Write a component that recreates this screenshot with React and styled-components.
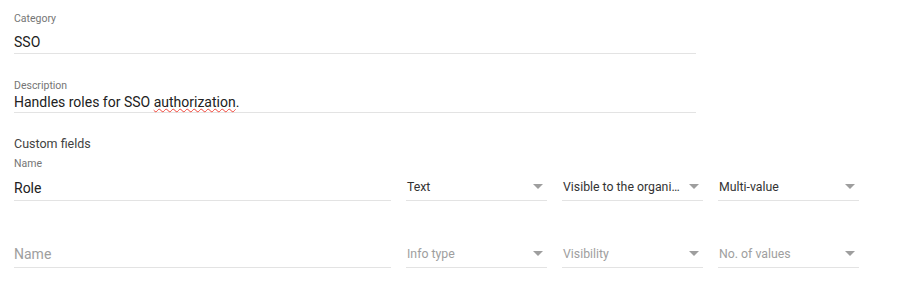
import React from "react";
import styled, { createGlobalStyle } from "styled-components";

const Global = createGlobalStyle`
  html, body { margin: 0; padding: 0; background: #fff; }
  body { font-family: Roboto, "Noto Sans", Arial, sans-serif; -webkit-font-smoothing: antialiased; }
`;

const Page = styled.div`
  padding: 12px 0 0 14px;
  width: 900px;
  box-sizing: border-box;
`;

const Field = styled.div`
  width: ${(p) => p.$w}px;
  display: flex;
  flex-direction: column;
  margin-top: ${(p) => p.$mt || 0}px;
`;

const Label = styled.div`
  font-size: 10.5px;
  line-height: 14px;
  color: #757575;
`;

const Value = styled.div`
  font-size: 14px;
  line-height: ${(p) => p.$lh || 20}px;
  color: ${(p) => (p.$placeholder ? "#9e9e9e" : "#212121")};
  padding: ${(p) => p.$pt || 0}px 0 ${(p) => p.$pb || 0}px;
  border-bottom: 1px solid #e3e3e3;
  white-space: nowrap;
`;

const Spell = styled.span`
  text-decoration: underline wavy #f04438;
  text-decoration-thickness: 1px;
  text-underline-offset: 1px;
`;

const SectionTitle = styled.div`
  font-size: 12.5px;
  line-height: 16px;
  color: #424242;
  margin: 23px 0 5px;
`;

const Row = styled.div`
  display: flex;
  align-items: flex-end;
  gap: 15px;
  margin-top: ${(p) => p.$mt || 0}px;
`;

const Select = styled.div`
  width: 141px;
  display: flex;
  align-items: center;
  height: 26px;
  border-bottom: 1px solid #e3e3e3;
  box-sizing: border-box;
  padding-bottom: 2px;
  gap: 4px;
`;

const SelectText = styled.div`
  flex: 1;
  min-width: 0;
  font-size: 12.3px;
  color: ${(p) => (p.$placeholder ? "#9e9e9e" : "#333")};
  white-space: nowrap;
  overflow: hidden;
  text-overflow: ellipsis;
  padding-left: 1px;
`;

const Arrow = styled.div`
  width: 0;
  height: 0;
  border-left: 5px solid transparent;
  border-right: 5px solid transparent;
  border-top: 5px solid #9e9e9e;
  margin-right: 4px;
  flex: none;
`;

const Dropdown = ({ children, placeholder }) => (
  <Select>
    <SelectText $placeholder={placeholder}>{children}</SelectText>
    <Arrow />
  </Select>
);

export default function App() {
  return (
    <Page>
      <Global />
      <Field $w={682}>
        <Label>Category</Label>
        <Value $pt={6} $pb={1}>SSO</Value>
      </Field>
      <Field $w={682} $mt={25}>
        <Label>Description</Label>
        <Value $lh={18} $pb={1}>
          Handles roles for SSO <Spell>authorization</Spell>.
        </Value>
      </Field>
      <SectionTitle>Custom fields</SectionTitle>
      <Row>
        <Field $w={377}>
          <Label>Name</Label>
          <Value $pt={7} $pb={2}>Role</Value>
        </Field>
        <Dropdown>Text</Dropdown>
        <Dropdown>Visible to the organization</Dropdown>
        <Dropdown>Multi-value</Dropdown>
      </Row>
      <Row $mt={41}>
        <Field $w={377}>
          <Value $placeholder $pb={3}>Name</Value>
        </Field>
        <Dropdown placeholder>Info type</Dropdown>
        <Dropdown placeholder>Visibility</Dropdown>
        <Dropdown placeholder>No. of values</Dropdown>
      </Row>
    </Page>
  );
}
